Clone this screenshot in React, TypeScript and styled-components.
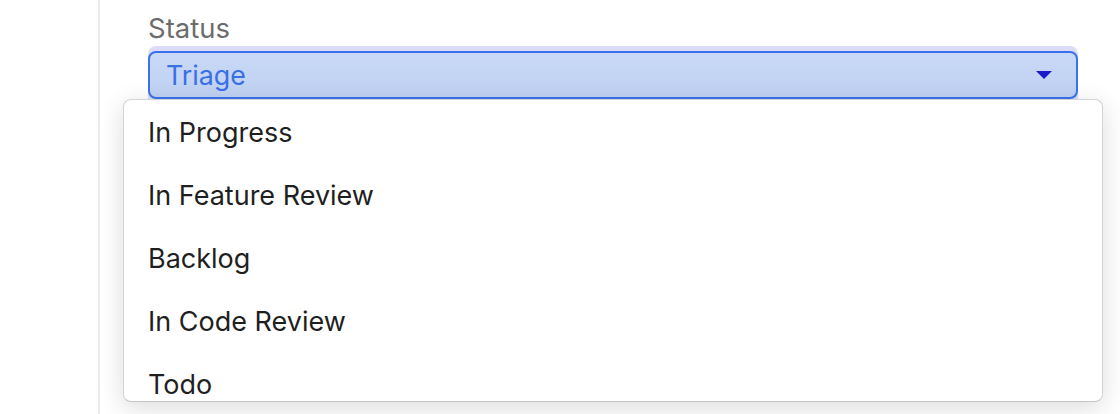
import styled, { createGlobalStyle } from "styled-components";

const GlobalStyle = createGlobalStyle`
  html, body {
    margin: 0;
    padding: 0;
    background: #ffffff;
    font-family: Inter, "Noto Sans", "Liberation Sans", sans-serif;
  }
`;

const Page = styled.div`
  display: flex;
  width: 1120px;
  height: 414px;
  overflow: hidden;
  background: #ffffff;
`;

const Sidebar = styled.aside`
  width: 98px;
  flex-shrink: 0;
  border-right: 2px solid #ebebeb;
`;

const Content = styled.main`
  flex: 1;
  padding: 12px 42px 0 48px;
`;

const Field = styled.div`
  position: relative;
  display: flex;
  flex-direction: column;
`;

const Label = styled.label`
  font-size: 27.5px;
  line-height: 32px;
  color: #6c6c6c;
`;

const SelectWrap = styled.div`
  margin-top: 2px;
  padding-top: 5px;
  background: #dcdcf9;
  border-radius: 8px 8px 0 0;
`;

const Select = styled.div`
  display: flex;
  align-items: center;
  justify-content: space-between;
  height: 44px;
  padding: 0 24px 0 16px;
  border: 2px solid #3a72ec;
  border-radius: 8px;
  background: linear-gradient(#c9d9f7, #bfd1f2);
  color: #3a6fe6;
  font-size: 26.8px;
`;

const Caret = styled.span`
  width: 0;
  height: 0;
  border-left: 8px solid transparent;
  border-right: 8px solid transparent;
  border-top: 8px solid #1b1bcc;
`;

const Menu = styled.ul`
  position: absolute;
  top: 87px;
  left: -25px;
  right: -25px;
  height: 300px;
  margin: 0;
  padding: 1px 0 0;
  list-style: none;
  overflow: hidden;
  background: #ffffff;
  border: 1px solid #d4d4d4;
  border-bottom-color: #c4c4c4;
  border-radius: 8px;
  box-shadow: 0 6px 26px rgba(0, 0, 0, 0.14);
`;

const Option = styled.li`
  display: flex;
  align-items: center;
  height: 63px;
  padding-left: 24px;
  font-size: 27px;
  color: #1f1f1f;
`;

const options = [
  "In Progress",
  "In Feature Review",
  "Backlog",
  "In Code Review",
  "Todo",
];

export default function App() {
  return (
    <>
      <GlobalStyle />
      <Page>
        <Sidebar />
        <Content>
          <Field>
            <Label>Status</Label>
            <SelectWrap>
              <Select>
                <span>Triage</span>
                <Caret />
              </Select>
            </SelectWrap>
            <Menu>
              {options.map((o) => (
                <Option key={o}>{o}</Option>
              ))}
            </Menu>
          </Field>
        </Content>
      </Page>
    </>
  );
}
